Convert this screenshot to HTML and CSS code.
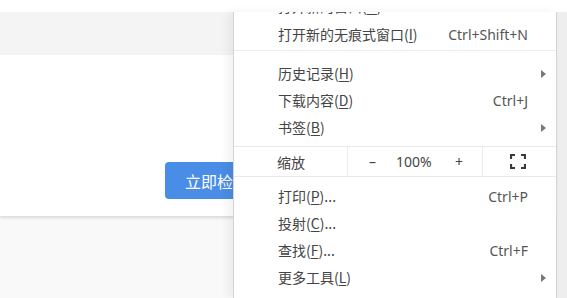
FILE: index.html
```html
<!DOCTYPE html>
<html lang="zh-CN">
<head>
<meta charset="utf-8">
<title>Menu</title>
<link rel="stylesheet" href="styles.css">
</head>
<body>
<div class="screen">
  <div class="topbar"></div>
  <div class="main">
    <div class="page">
      <div class="band"></div>
      <div class="card">
        <button class="btn">立即检查更新</button>
      </div>
      <div class="rest"></div>
    </div>
    <div class="track"></div>
  </div>

  <div class="menu">
    <div class="menu-inner">
      <div class="item first"><span class="label">打开新的窗口(<u>N</u>)</span><span class="key">Ctrl+N</span><span class="arrow"></span></div>
      <div class="item"><span class="label">打开新的无痕式窗口(<u>I</u>)</span><span class="key">Ctrl+Shift+N</span><span class="arrow"></span></div>
      <div class="sep"></div>
      <div class="item"><span class="label">历史记录(<u>H</u>)</span><span class="key"></span><span class="arrow"><i class="tri"></i></span></div>
      <div class="item"><span class="label">下载内容(<u>D</u>)</span><span class="key">Ctrl+J</span><span class="arrow"></span></div>
      <div class="item"><span class="label">书签(<u>B</u>)</span><span class="key"></span><span class="arrow"><i class="tri"></i></span></div>
      <div class="sep2"></div>
      <div class="zoomrow">
        <div class="zcell zlabel">缩放</div>
        <div class="zcell zctrl"><span class="zminus">–</span><span class="zval">100%</span><span class="zplus">+</span></div>
        <div class="zcell zfull">
          <svg width="16" height="15" viewBox="0 0 16 15" aria-hidden="true">
            <path d="M1 5V1h4M11 1h4v4M15 10v4h-4M5 14H1v-4" fill="none" stroke="#3a3a3a" stroke-width="2.2"/>
          </svg>
        </div>
      </div>
      <div class="gap"></div>
      <div class="item"><span class="label">打印(<u>P</u>)...</span><span class="key">Ctrl+P</span><span class="arrow"></span></div>
      <div class="item"><span class="label">投射(<u>C</u>)...</span><span class="key"></span><span class="arrow"></span></div>
      <div class="item"><span class="label">查找(<u>F</u>)...</span><span class="key">Ctrl+F</span><span class="arrow"></span></div>
      <div class="item"><span class="label">更多工具(<u>L</u>)</span><span class="key"></span><span class="arrow"><i class="tri"></i></span></div>
    </div>
  </div>
</div>
</body>
</html>
```

FILE: styles.css
```css
html, body {
  margin: 0;
  padding: 0;
}
body {
  width: 567px;
  height: 298px;
  overflow: hidden;
  background: #ffffff;
  font-family: "Noto Sans", "Noto Sans CJK SC", sans-serif;
}
.screen {
  position: relative;
  width: 567px;
  height: 298px;
  overflow: hidden;
}
.topbar {
  height: 12px;
  background: #ffffff;
}
.main {
  display: flex;
  height: 286px;
}
.page {
  flex: 1;
  display: flex;
  flex-direction: column;
  background: #f9f9f9;
}
.band {
  height: 43px;
  background: #f4f4f4;
}
.card {
  height: 161px;
  box-sizing: border-box;
  padding: 107px 0 0 165px;
  background: #ffffff;
  box-shadow: 0 2px 3px rgba(0, 0, 0, 0.13);
  position: relative;
  z-index: 1;
}
.btn {
  width: 110px;
  height: 37px;
  border: 0;
  border-radius: 4px;
  background: #4a8de6;
  color: #ffffff;
  font-family: "Noto Sans CJK SC", sans-serif;
  font-size: 16px;
  text-align: left;
  padding: 0 0 0 20px;
  white-space: nowrap;
  overflow: hidden;
}
.rest {
  flex: 1;
}
.track {
  width: 11px;
  background: #eeeeee;
  border-left: 1px solid #d6d6d6;
  box-sizing: border-box;
}
.menu {
  position: absolute;
  left: 233px;
  top: 12px;
  width: 324px;
  height: 286px;
  box-sizing: border-box;
  background: #ffffff;
  border-left: 1px solid #d4d4d4;
  border-right: 1px solid #d4d4d4;
  box-shadow: -5px 0 9px rgba(0, 0, 0, 0.06);
  overflow: hidden;
  z-index: 5;
  color: #444444;
  font-size: 14px;
}
.menu-inner {
  margin-top: -21px;
}
.item {
  display: flex;
  align-items: center;
  height: 27px;
  line-height: 27px;
  padding-left: 44px;
  white-space: nowrap;
}
.item.first {
  height: 30px;
  padding-top: 2px;
  box-sizing: border-box;
  align-items: flex-start;
}
.label {
  flex: 1;
  font-family: "Noto Sans CJK SC", sans-serif;
}
.label u {
  text-underline-offset: 2px;
}
.key {
  font-family: "Noto Sans", "Open Sans", sans-serif;
  color: #555555;
}
.arrow {
  width: 28px;
  display: flex;
  justify-content: center;
  padding-left: 2px;
  box-sizing: border-box;
}
.tri {
  display: block;
  width: 0;
  height: 0;
  border-top: 4px solid transparent;
  border-bottom: 4px solid transparent;
  border-left: 5px solid #777777;
}
.sep {
  height: 3px;
  margin-bottom: 9px;
  box-sizing: border-box;
  border-bottom: 1px solid #ececec;
}
.sep2 {
  height: 5px;
}
.zoomrow {
  display: flex;
  height: 31px;
  box-sizing: border-box;
  border-top: 1px solid #e9e9e9;
  border-bottom: 1px solid #e9e9e9;
}
.zcell {
  display: flex;
  align-items: center;
  box-sizing: border-box;
}
.zlabel {
  width: 114px;
  padding-left: 43px;
  border-right: 1px solid #ececec;
  font-family: "Noto Sans CJK SC", sans-serif;
}
.zctrl {
  width: 135px;
  padding-left: 21px;
  border-right: 1px solid #ececec;
  font-family: "Noto Sans", sans-serif;
}
.zminus {
  width: 9px;
}
.zval {
  margin-left: 18px;
  width: 40px;
}
.zplus {
  margin-left: 19px;
}
.zfull {
  flex: 1;
  justify-content: center;
  padding-right: 3px;
}
.gap {
  height: 6px;
}
```
